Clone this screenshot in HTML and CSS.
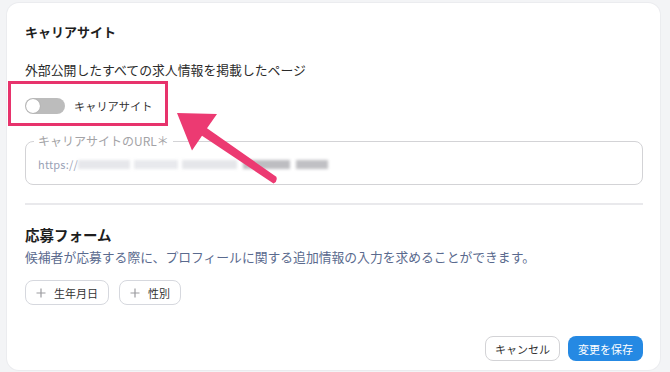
FILE: index.html
```html
<!DOCTYPE html>
<html lang="ja">
<head>
<meta charset="utf-8">
<title>キャリアサイト設定</title>
<link rel="stylesheet" href="styles.css">
</head>
<body>
<div class="card">
  <section class="career">
    <h2 class="title">キャリアサイト</h2>
    <p class="lead">外部公開したすべての求人情報を掲載したページ</p>
    <div class="toggle-row">
      <span class="switch"><span class="knob"></span></span>
      <span class="toggle-label">キャリアサイト</span>
    </div>
    <fieldset class="url-field">
      <legend>キャリアサイトのURL＊</legend>
      <div class="url-value">https://<span class="blur b1"></span><span class="blur b2"></span><span class="blur b3"></span><span class="blur b4"></span><span class="blur b5"></span></div>
    </fieldset>
  </section>
  <hr class="divider">
  <section class="apply">
    <h2 class="subtitle">応募フォーム</h2>
    <p class="desc">候補者が応募する際に、プロフィールに関する追加情報の入力を求めることができます。</p>
    <div class="chips">
      <button class="chip"><svg class="plus" viewBox="0 0 10 10"><path d="M5 0.5V9.5M0.5 5H9.5"/></svg>生年月日</button>
      <button class="chip"><svg class="plus" viewBox="0 0 10 10"><path d="M5 0.5V9.5M0.5 5H9.5"/></svg>性別</button>
    </div>
  </section>
  <div class="actions">
    <button class="btn cancel">キャンセル</button>
    <button class="btn save">変更を保存</button>
  </div>
  <div class="highlight"></div>
  <svg class="arrow" viewBox="7 3 653 367" preserveAspectRatio="none">
    <path d="M177 113 L217 114 L207 128.3 L276.3 176.7 Q278 181 273.5 183.5 L202 135.7 L192 150.5 Z" />
  </svg>
</div>
</body>
</html>
```

FILE: styles.css
```css
* { box-sizing: border-box; }
html, body { margin: 0; padding: 0; }
body {
  background: #f3f4f6;
  font-family: "Noto Sans CJK JP", "Noto Sans", sans-serif;
  color: #222;
  width: 670px;
  height: 372px;
  overflow: hidden;
}
.card {
  position: relative;
  margin: 3px 10px 0 7px;
  width: 653px;
  height: 367px;
  background: #fff;
  border-radius: 12px;
  box-shadow: 0 0 0 1px #ebecef;
  padding: 20px 17px 0 18px;
  display: flex;
  flex-direction: column;
}
.title {
  margin: 0;
  font-size: 13px;
  line-height: 18px;
  font-weight: 700;
  color: #1e1e1e;
}
.lead {
  margin: 20px 0 0;
  font-size: 12.85px;
  line-height: 18px;
  color: #2a2a2a;
}
.toggle-row {
  margin-top: 19px;
  height: 16px;
  display: flex;
  align-items: center;
  gap: 9px;
}
.switch {
  position: relative;
  width: 40px;
  height: 16px;
  border-radius: 8px;
  background: #bcbcbc;
  display: flex;
  align-items: center;
  padding-left: 1px;
}
.knob {
  width: 14px;
  height: 14px;
  border-radius: 50%;
  background: #fff;
  box-shadow: 0 0 1px rgba(0,0,0,0.3);
}
.toggle-label {
  font-size: 11.2px;
  line-height: 16px;
  color: #333;
}
.url-field {
  margin: 20px 0 0;
  padding: 0 12px 12px;
  border: 1px solid #d3d3d6;
  border-radius: 8px;
  min-width: 0;
}
.url-field legend {
  font-size: 12px;
  line-height: 14px;
  color: #a3a3a6;
  padding: 0 4px;
  margin-left: -4px;
}
.url-value {
  margin-top: 8px;
  height: 16px;
  display: flex;
  align-items: center;
  font-size: 11px;
  color: #9aa2b6;
  letter-spacing: 0.2px;
}
.blur {
  display: inline-block;
  height: 9px;
  filter: blur(1.8px);
}
.b1 { width: 52px; background: #e6e7eb; }
.b2 { width: 44px; background: #e8e9ed; margin-left: 4px; }
.b3 { width: 55px; background: #e5e6ea; margin-left: 4px; }
.b4 { width: 47px; background: #bdbdc1; margin-left: 6px; }
.b5 { width: 32px; background: #c0c0c4; margin-left: 6px; }
.divider {
  margin: 18px 0 0;
  border: none;
  height: 2px;
  background: #e9e9ec;
}
.subtitle {
  margin: 20px 0 0;
  font-size: 14.5px;
  line-height: 20px;
  font-weight: 700;
  color: #1e1e1e;
}
.desc {
  margin: 4px 0 0;
  font-size: 12.8px;
  line-height: 16px;
  color: #5a6a8e;
}
.chips {
  margin-top: 15px;
  display: flex;
  gap: 10px;
}
.chip {
  height: 25px;
  padding: 0 10px;
  display: flex;
  align-items: center;
  gap: 8px;
  border: 1px solid #d6d8de;
  border-radius: 8px;
  background: #fff;
  font-family: inherit;
  font-size: 11px;
  color: #333;
}
.plus {
  width: 10px;
  height: 10px;
  stroke: #9b9b9f;
  stroke-width: 1.2;
  fill: none;
}
.actions {
  margin-top: 31px;
  display: flex;
  justify-content: flex-end;
  gap: 8px;
}
.btn {
  width: 75px;
  height: 25px;
  border-radius: 8px;
  font-family: inherit;
  font-size: 11px;
  padding: 0;
}
.cancel {
  background: #fff;
  border: 1px solid #d3d3d6;
  color: #333;
}
.save {
  background: #2589e3;
  border: none;
  color: #fff;
}
.highlight {
  position: absolute;
  left: 1px;
  top: 78px;
  width: 160px;
  height: 45px;
  border: 3px solid #e7336c;
  pointer-events: none;
}
.arrow {
  position: absolute;
  left: 0;
  top: 0;
  width: 653px;
  height: 367px;
  pointer-events: none;
  fill: #ec3a72;
}
```
